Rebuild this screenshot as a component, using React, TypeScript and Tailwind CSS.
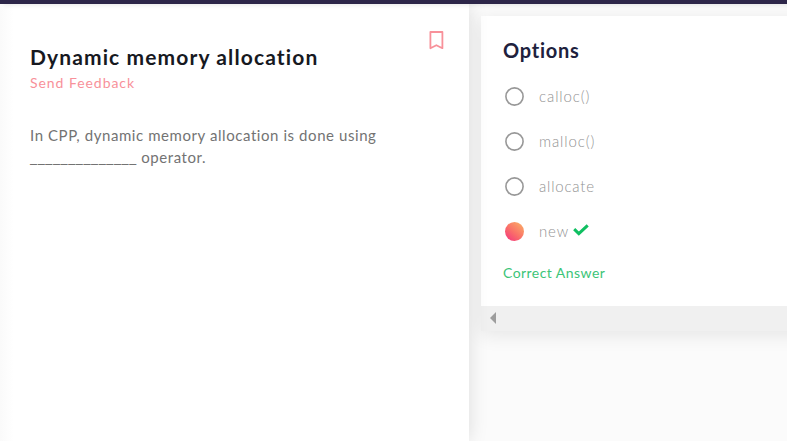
const options = [
  { label: 'calloc()', tracking: 'tracking-[0.9px]' },
  { label: 'malloc()', tracking: 'tracking-[0.88px]' },
  { label: 'allocate', tracking: 'tracking-[0.8px]' },
  { label: 'new', tracking: 'tracking-[0.8px]', correct: true },
];

function BookmarkIcon() {
  return (
    <svg width="15" height="19" viewBox="0 0 15 19" fill="none" stroke="#f8919a" strokeWidth="1.8" strokeLinejoin="round">
      <path d="M1.4 1H13.4V17.2L7.4 14.2L1.4 17.2Z" />
    </svg>
  );
}

function CheckIcon() {
  return (
    <svg width="16" height="12" viewBox="0 0 16 12" fill="none" stroke="#0fbf61" strokeWidth="3">
      <path d="M1.2 5.2L5.8 9.6L14.7 1.3" />
    </svg>
  );
}

function Problem() {
  return (
    <section className="relative z-10 flex w-[469px] shrink-0 items-start justify-between bg-[linear-gradient(to_right,#fafafa,#ffffff_14px)] pl-[30px] pr-[25px] shadow-[0_0_18px_rgba(0,0,0,0.13)]">
      <div className="whitespace-nowrap">
        <h1 className="mt-[39px] text-[21px] leading-7 font-bold tracking-[1.12px] text-[#17191f]">
          Dynamic memory allocation
        </h1>
        <p className="mt-[2px] text-[14px] leading-5 tracking-[0.95px] text-[#f8919a]">Send Feedback</p>
        <div className="mt-[31px] text-[15px] leading-[22px] tracking-[0.57px] text-[#737373]">
          <p>In CPP, dynamic memory allocation is done using</p>
          <p>
            <span className="font-['Open_Sans',sans-serif] text-[16px] leading-[20px] tracking-[0.62px]">______________</span>{' '}
            operator.
          </p>
        </div>
      </div>
      <div className="mt-[27px]">
        <BookmarkIcon />
      </div>
    </section>
  );
}

function Options() {
  return (
    <main className="min-w-0 flex-1 bg-[#fbfbfb] pl-3">
      <div className="mt-3 w-[360px] bg-white shadow-[0_4px_18px_rgba(0,0,0,0.09)]">
        <div className="h-[290px] pl-[22px] pt-[20px]">
          <h2 className="text-[20px] leading-7 font-bold tracking-[0.75px] text-[#20213d]">Options</h2>
          <ul className="mt-[10px]">
            {options.map((option) => (
              <li key={option.label} className="flex h-[45px] items-center pl-[2px]">
                {option.correct ? (
                  <span className="size-[19px] rounded-full bg-[linear-gradient(40deg,#f43c7c_8%,#fa7268_48%,#fab466)]" />
                ) : (
                  <svg className="size-[19px]" viewBox="0 0 19 19" fill="none" stroke="#989898" strokeWidth="1.6">
                    <circle cx="9.5" cy="9.5" r="8.6" />
                  </svg>
                )}
                <span className={`mb-[2px] ml-[15px] text-[15px] leading-5 font-light text-[#929292] ${option.tracking}`}>
                  {option.label}
                </span>
                {option.correct && (
                  <span className="mb-[3px] ml-[4px]">
                    <CheckIcon />
                  </span>
                )}
              </li>
            ))}
          </ul>
          <p className="mt-[9px] text-[14px] leading-5 tracking-[0.45px] text-[#3cc477]">Correct Answer</p>
        </div>
        <div className="flex h-[25px] items-center bg-[#f0f0f0] pb-px pl-[9px]">
          <svg width="6" height="12" viewBox="0 0 6 12" fill="#9d9d9d">
            <path d="M6 0V12L0 6Z" />
          </svg>
        </div>
      </div>
    </main>
  );
}

export default function App() {
  return (
    <div className="flex h-[441px] w-[787px] flex-col overflow-hidden bg-[#fbfbfb] font-['Lato',sans-serif]">
      <header className="relative z-20 h-1 shrink-0 bg-[#2d2649] shadow-[4px_1px_4px_rgba(0,0,0,0.1)]" />
      <div className="flex min-h-0 flex-1">
        <Problem />
        <Options />
      </div>
    </div>
  );
}
